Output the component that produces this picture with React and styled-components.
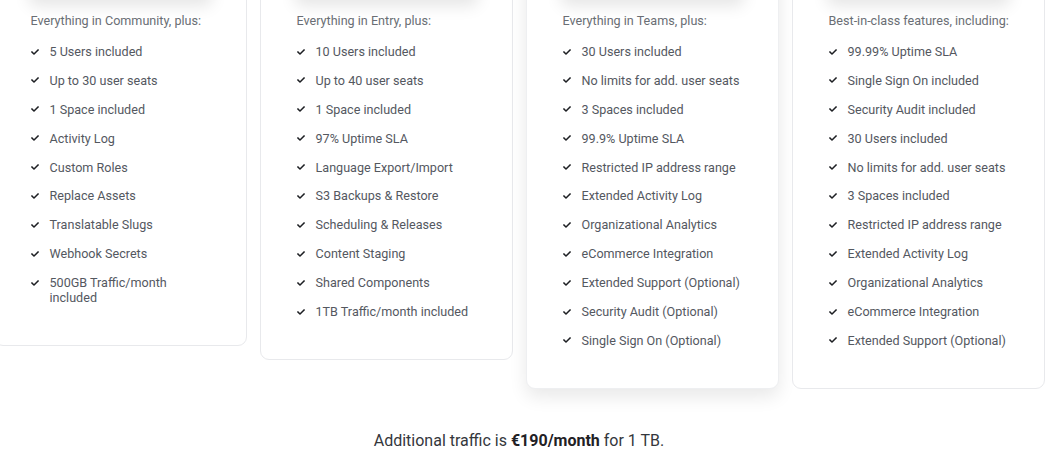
import React from "react";
import styled, { createGlobalStyle } from "styled-components";
import { FaCheck } from "react-icons/fa";

const plans = [
  {
    name: "Entry",
    heading: "Everything in Community, plus:",
    items: [
      "5 Users included",
      "Up to 30 user seats",
      "1 Space included",
      "Activity Log",
      "Custom Roles",
      "Replace Assets",
      "Translatable Slugs",
      "Webhook Secrets",
      "500GB Traffic/month included",
    ],
  },
  {
    name: "Teams",
    heading: "Everything in Entry, plus:",
    items: [
      "10 Users included",
      "Up to 40 user seats",
      "1 Space included",
      "97% Uptime SLA",
      "Language Export/Import",
      "S3 Backups & Restore",
      "Scheduling & Releases",
      "Content Staging",
      "Shared Components",
      "1TB Traffic/month included",
    ],
  },
  {
    name: "Business",
    featured: true,
    heading: "Everything in Teams, plus:",
    items: [
      "30 Users included",
      "No limits for add. user seats",
      "3 Spaces included",
      "99.9% Uptime SLA",
      "Restricted IP address range",
      "Extended Activity Log",
      "Organizational Analytics",
      "eCommerce Integration",
      "Extended Support (Optional)",
      "Security Audit (Optional)",
      "Single Sign On (Optional)",
    ],
  },
  {
    name: "Enterprise",
    heading: "Best-in-class features, including:",
    items: [
      "99.99% Uptime SLA",
      "Single Sign On included",
      "Security Audit included",
      "30 Users included",
      "No limits for add. user seats",
      "3 Spaces included",
      "Restricted IP address range",
      "Extended Activity Log",
      "Organizational Analytics",
      "eCommerce Integration",
      "Extended Support (Optional)",
    ],
  },
];

const App = () => {
  return (
    <>
      <GlobalStyle />
      <Page>
        <Grid>
          {plans.map((plan) => (
            <Card key={plan.name} $featured={plan.featured}>
              <Cta aria-hidden="true" />
              <Heading>{plan.heading}</Heading>
              <List>
                {plan.items.map((item) => (
                  <Item key={item}>
                    <Tick>
                      <FaCheck />
                    </Tick>
                    <span>{item}</span>
                  </Item>
                ))}
              </List>
            </Card>
          ))}
        </Grid>
        <Note>
          Additional traffic is <strong>€190/month</strong> for 1 TB.
        </Note>
      </Page>
    </>
  );
};

export default App;

// Styled Components
const GlobalStyle = createGlobalStyle`
  body {
    margin: 0;
    background: #fff;
    font-family: Roboto, "Liberation Sans", sans-serif;
    overflow: hidden;
  }
`;

const Page = styled.div`
  width: 1038px; /* viewport minus the scrollbar of the original page */
  display: flex;
  flex-direction: column;
  align-items: center;
  margin-top: -72px; /* card tops sit above the fold */
`;

const Grid = styled.div`
  width: 1051px;
  flex-shrink: 0;
  display: grid;
  grid-template-columns: repeat(4, 253px);
  gap: 13px;
  align-items: start;
`;

const Card = styled.div`
  background: #fff;
  border: 1px solid ${({ $featured }) => ($featured ? "#eeeff1" : "#e8e9ec")};
  border-radius: 9px;
  padding: 27px 28px 40px 36px;
  box-shadow: ${({ $featured }) =>
    $featured ? "0 8px 18px rgba(0, 0, 0, 0.09)" : "none"};
`;

const Cta = styled.div`
  height: 44px;
  margin: 0 6px 13px -2px;
  border-radius: 6px;
  background: #fff;
  box-shadow: 0 6px 16px rgba(0, 0, 0, 0.1);
`;

const Heading = styled.div`
  font-size: 12.6px;
  line-height: 15px;
  color: #6a6e74;
  margin-bottom: 16px;
`;

const List = styled.ul`
  list-style: none;
  margin: 0;
  padding: 0 8px 0 0;
  display: flex;
  flex-direction: column;
  gap: 13.9px;
`;

const Item = styled.li`
  display: flex;
  align-items: flex-start;
  gap: 10px;
  font-size: 12.6px;
  line-height: 15px;
  color: #54585f;
`;

const Tick = styled.span`
  flex: 0 0 9px;
  height: 15px;
  display: flex;
  align-items: center;
  color: #1d1f23;

  svg {
    width: 8px;
    height: 8px;
  }
`;

const Note = styled.p`
  margin: 42px 0 0;
  font-size: 16px;
  line-height: 20px;
  color: #34373c;

  strong {
    font-weight: 700;
    color: #1f2125;
  }
`;
